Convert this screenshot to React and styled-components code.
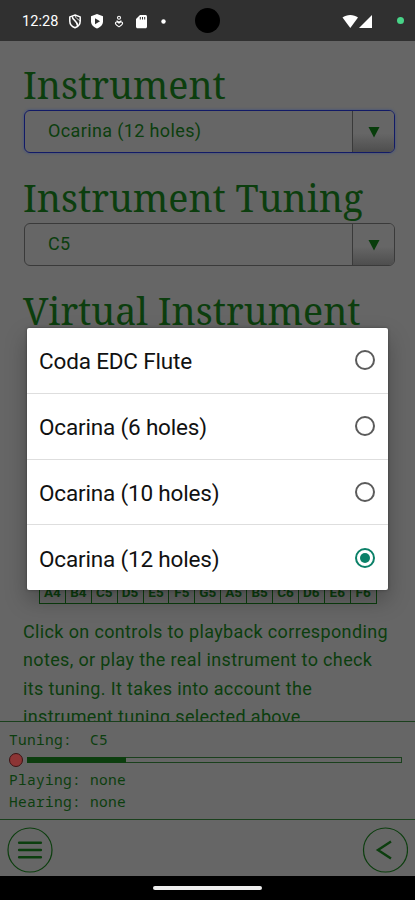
import React from "react";
import styled, { createGlobalStyle } from "styled-components";

const GlobalStyle = createGlobalStyle`
  * { box-sizing: border-box; }
  body { margin: 0; background: #000; }
`;

const GREEN = "#0c3e0e";

const Screen = styled.div`
  position: relative;
  width: 415px;
  height: 900px;
  overflow: hidden;
  display: flex;
  flex-direction: column;
  background: #666;
  color: ${GREEN};
  font-family: Roboto, sans-serif;
`;

const StatusBar = styled.header`
  position: relative;
  flex: none;
  height: 41px;
  display: flex;
  align-items: center;
  background: #303030;
  color: #fff;
  padding: 0 11px 0 22px;
`;

const Clock = styled.span`
  width: 46px;
  font-size: 14.5px;
  letter-spacing: 0.1px;
  line-height: 20px;
  padding-top: 3px;
  white-space: nowrap;
`;

const StatusIcons = styled.svg`
  display: block;
  width: ${(p) => p.$w}px;
  height: 20px;
`;

const Spacer = styled.div`
  flex: 1;
`;

const PrivacyDot = styled.i`
  width: 7px;
  height: 7px;
  margin-left: 24px;
  border-radius: 50%;
  background: #48d488;
`;

const Camera = styled.i`
  position: absolute;
  left: 195px;
  top: 8px;
  width: 25px;
  height: 25px;
  border-radius: 50%;
  background: #000;
`;

const Content = styled.main`
  flex: none;
  height: 680px;
  overflow: hidden;
  padding: 19px 20px 0 23px;
`;

const Heading = styled.h1`
  margin: 0;
  height: 50px;
  font: 400 37.6px/50px "Noto Serif", "DejaVu Serif Condensed", "DejaVu Serif", serif;
  font-stretch: condensed;
  white-space: nowrap;
`;

const Select = styled.div`
  display: flex;
  width: 371px;
  height: 43px;
  margin: 0 0 20px 1px;
  border: 1px solid ${(p) => (p.$focused ? "#121a66" : "#3a3a3a")};
  border-radius: 6px;
  overflow: hidden;
  box-shadow: ${(p) => (p.$focused ? "0 0 2px 1px #505a74" : "none")};
`;

const SelectValue = styled.span`
  flex: 1;
  padding-left: 23px;
  font-size: 18px;
  line-height: 40px;
  letter-spacing: 0.37px;
`;

const SelectButton = styled.span`
  width: 42px;
  display: flex;
  align-items: center;
  justify-content: center;
  border-left: 1px solid #3a3a3a;
  background: linear-gradient(#666 55%, #4e4e4e);
`;

const NoteTable = styled.div`
  display: grid;
  grid-template-columns: repeat(13, 25.9px);
  width: 338px;
  margin: 244px 0 0 16px;
  border-left: 1px solid ${GREEN};
`;

const NoteCell = styled.span`
  height: 24px;
  border: solid ${GREEN};
  border-width: 1px 1px 1px 0;
  text-align: center;
  font-size: 13.5px;
  font-weight: 700;
  line-height: 23px;
`;

const Description = styled.p`
  margin: 14px 0 0;
  font-size: 18px;
  line-height: 28.3px;
  letter-spacing: 0.36px;
  white-space: nowrap;
`;

const Line = styled.span`
  display: block;
`;

const StatusPanel = styled.section`
  flex: none;
  height: 99px;
  border: solid #1a401c;
  border-width: 1px 0;
  padding: 7px 13px 0 9px;
`;

const MonoLine = styled.div`
  height: 22px;
  font: 14.5px/20px "Noto Sans Mono", "DejaVu Sans Mono", monospace;
  letter-spacing: 0.3px;
  white-space: pre;
`;

const MeterRow = styled.div`
  display: flex;
  align-items: center;
  gap: 4px;
  height: 18px;
`;

const RecordDot = styled.i`
  width: 14px;
  height: 14px;
  border: 1px solid #3c1414;
  border-radius: 50%;
  background: #8c3535;
`;

const Meter = styled.div`
  flex: 1;
  height: 6px;
  border: 1px solid #1a401c;
`;

const MeterFill = styled.div`
  width: 96.5px;
  height: 100%;
  background: ${GREEN};
  outline: 1px solid ${GREEN};
`;

const BottomBar = styled.nav`
  flex: none;
  height: 56px;
  display: flex;
  justify-content: space-between;
  align-items: center;
  padding: 4px 7px 0;
`;

const NavIcon = styled.svg`
  display: block;
  width: 46px;
  height: 46px;
  fill: none;
  stroke: ${GREEN};
`;

const GestureBar = styled.footer`
  flex: 1;
  display: flex;
  justify-content: center;
  background: #000;
  padding-top: 10px;
`;

const Handle = styled.i`
  width: 109px;
  height: 4px;
  border-radius: 2px;
  background: #eee;
`;

const Dialog = styled.ul`
  position: absolute;
  left: 27px;
  top: 328px;
  width: 361px;
  height: 262px;
  margin: 0;
  padding: 0;
  list-style: none;
  border-radius: 2px;
  background: #fff;
  color: #111;
  box-shadow: 0 10px 22px rgba(0, 0, 0, 0.27), 0 0 3px rgba(0, 0, 0, 0.35);
`;

const Option = styled.li`
  display: flex;
  justify-content: space-between;
  align-items: center;
  height: 65.8px;
  padding: 0 12px;
  border-bottom: 1px solid #dedede;
  &:last-child { border-bottom: 0; height: 64.6px; }
`;

const OptionLabel = styled.span`
  font-size: 22.5px;
  line-height: 28px;
  padding-top: 2px;
  letter-spacing: -0.17px;
  white-space: nowrap;
`;

const Radio = styled.i`
  display: grid;
  place-items: center;
  width: 20px;
  height: 20px;
  margin-right: 1px;
  border: 2px solid ${(p) => (p.$on ? "#0b8068" : "#5b5b5b")};
  border-radius: 50%;
  &::after {
    content: "";
    width: 10px;
    height: 10px;
    border-radius: 50%;
    background: ${(p) => (p.$on ? "#0b8068" : "transparent")};
  }
`;

const Arrow = () => (
  <svg width="12" height="12" viewBox="0 0 12 12">
    <path d="M.5 1h11L6 11.500Z" fill="#083d0b" />
  </svg>
);

const notes = ["A4", "B4", "C5", "D5", "E5", "F5", "G5", "A5", "B5", "C6", "D6", "E6", "F6"];
const options = [
  { name: "Coda EDC Flute" },
  { name: "Ocarina (6 holes)" },
  { name: "Ocarina (10 holes)" },
  { name: "Ocarina (12 holes)", on: true },
];
const lines = [
  "Click on controls to playback corresponding",
  "notes, or play the real instrument to check",
  "its tuning. It takes into account the",
  "instrument tuning selected above.",
];

export default function App() {
  return (
    <Screen>
      <GlobalStyle />
      <StatusBar>
        <Clock>12:28</Clock>
        <StatusIcons $w={100} viewBox="0 0 100 20">
          <g fill="none" stroke="#fff" strokeWidth="1.5">
            <path d="M7 4 12.200 5.900v4.300c0 3.100-2.100 5.300-5.200 6.600-3.100-1.300-5.200-3.500-5.200-6.600V5.900Z" />
            <path d="M4.200 5.300c.2 4.700 5.300 3.600 5.500 10" />
            <path d="M7 4.100c.3 3.500 2.700 3.500 5 6" strokeWidth="0.8" />
          </g>
          <path d="M29 3l6 2.200v5c0 3.600-2.500 5.900-6 7.300-3.500-1.400-6-3.700-6-7.300v-5Z" fill="#fff" />
          <path d="M27 7.200v6l5-3Z" fill="#303030" />
          <g fill="none" stroke="#fff" strokeWidth="1.1">
            <circle cx="51" cy="6.800" r="1.500" />
            <path d="m48.600 9.600 2.400 1.700 2.400-1.700M51 15.800c-1.500-1-3.600-2.300-3.600-3.600 0-1.300 2-1.700 3.600 0 1.600-1.700 3.600-1.300 3.600 0 0 1.300-2.100 2.600-3.600 3.600Z" />
          </g>
          <path d="M72 4h5.500c.8 0 1.500.7 1.500 1.500v10.300c0 .8-.7 1.500-1.500 1.500h-8c-.8 0-1.500-.7-1.500-1.500V8Z" fill="#fff" />
          <path d="M72.300 6v2.500M74.500 6v2.500M76.700 6v2.500" stroke="#303030" strokeWidth="1" />
          <circle cx="95.500" cy="10.500" r="2.200" fill="#fff" />
        </StatusIcons>
        <Spacer />
        <StatusIcons $w={32} viewBox="0 0 32 20">
          <path d="M1.500 6.500C5.500 3 13 3 17 6.500L9.300 17Z" fill="#fff" />
          <path d="M31 4v13H18Z" fill="#fff" />
        </StatusIcons>
        <PrivacyDot />
        <Camera />
      </StatusBar>

      <Content>
        <Heading>Instrument</Heading>
        <Select $focused>
          <SelectValue>Ocarina (12 holes)</SelectValue>
          <SelectButton><Arrow /></SelectButton>
        </Select>
        <Heading>Instrument Tuning</Heading>
        <Select>
          <SelectValue>C5</SelectValue>
          <SelectButton><Arrow /></SelectButton>
        </Select>
        <Heading>Virtual Instrument</Heading>
        <NoteTable>
          {notes.map((n) => <NoteCell key={n}>{n}</NoteCell>)}
        </NoteTable>
        <Description>
          {lines.map((text) => <Line key={text}>{text}</Line>)}
        </Description>
      </Content>

      <StatusPanel>
        <MonoLine>Tuning:  C5</MonoLine>
        <MeterRow>
          <RecordDot />
          <Meter><MeterFill /></Meter>
        </MeterRow>
        <MonoLine>Playing: none</MonoLine>
        <MonoLine>Hearing: none</MonoLine>
      </StatusPanel>

      <BottomBar>
        <NavIcon viewBox="0 0 46 46">
          <circle cx="23" cy="23" r="22" strokeWidth="1.2" />
          <path d="M12.200 15.700h21.600M12.200 23h21.600M12.200 30.300h21.600" strokeWidth="2.6" strokeLinecap="round" />
        </NavIcon>
        <NavIcon viewBox="0 0 46 46">
          <circle cx="23.500" cy="23" r="22" strokeWidth="1.2" />
          <path d="M29 14.500 16 23l13 8.500" strokeWidth="2.4" />
        </NavIcon>
      </BottomBar>

      <GestureBar><Handle /></GestureBar>

      <Dialog>
        {options.map((o) => (
          <Option key={o.name}>
            <OptionLabel>{o.name}</OptionLabel>
            <Radio $on={o.on} />
          </Option>
        ))}
      </Dialog>
    </Screen>
  );
}
